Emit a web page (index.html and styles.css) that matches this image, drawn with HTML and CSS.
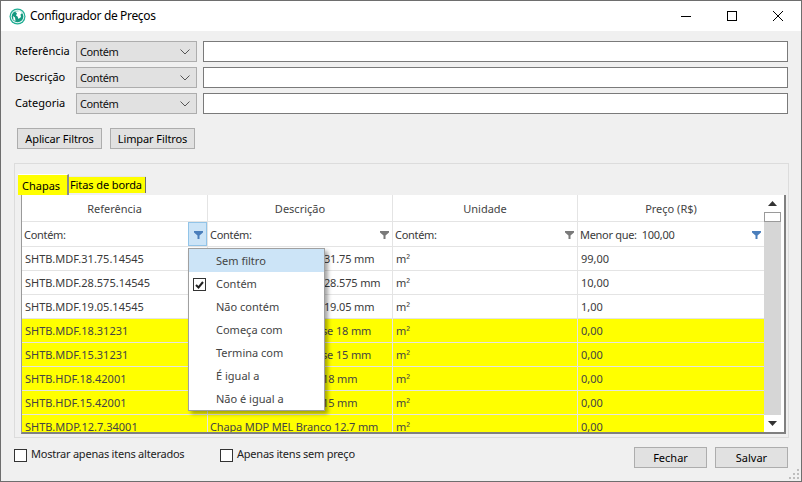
FILE: index.html
```html
<!DOCTYPE html>
<html lang="pt-BR">
<head>
<meta charset="utf-8">
<title>Configurador de Preços</title>
<link rel="stylesheet" href="styles.css">
</head>
<body>
<div class="window">
  <header class="titlebar">
    <svg class="app-icon" width="17" height="17" viewBox="0 0 17 17"><circle cx="8.5" cy="8.5" r="8" fill="#1fae94"/><circle cx="8.5" cy="8.5" r="6.8" fill="#e6f6f3"/><circle cx="8.5" cy="8.5" r="5.8" fill="#14987f"/><path d="M6 3.5 L11 3 L13.2 5 L11.5 6.5 L12 9 L9.5 11 L8.5 8.5 L7 7.5 L8 5.5Z M4 8 L6 9.5 L6.5 13 L4.5 12Z" fill="#fff"/></svg>
    <span class="title">Configurador de Preços</span>
    <div class="controls">
      <svg width="10" height="10" viewBox="0 0 10 10"><path d="M0 5.5H10" stroke="#000"/></svg>
      <svg width="10" height="10" viewBox="0 0 10 10"><rect x=".5" y=".5" width="9" height="9" fill="none" stroke="#000"/></svg>
      <svg width="10" height="10" viewBox="0 0 10 10"><path d="M0 0L10 10M10 0L0 10" stroke="#000" stroke-width="1"/></svg>
    </div>
  </header>

  <section class="filters">
    <div class="filter-row">
      <label class="filter-label">Referência</label>
      <div class="combo"><span>Contém</span><svg width="10" height="6" viewBox="0 0 10 6"><path d="M.5 .5L5 5L9.5 .5" fill="none" stroke="#555"/></svg></div>
      <input class="text-input" type="text">
    </div>
    <div class="filter-row">
      <label class="filter-label">Descrição</label>
      <div class="combo"><span>Contém</span><svg width="10" height="6" viewBox="0 0 10 6"><path d="M.5 .5L5 5L9.5 .5" fill="none" stroke="#555"/></svg></div>
      <input class="text-input" type="text">
    </div>
    <div class="filter-row">
      <label class="filter-label">Categoria</label>
      <div class="combo"><span>Contém</span><svg width="10" height="6" viewBox="0 0 10 6"><path d="M.5 .5L5 5L9.5 .5" fill="none" stroke="#555"/></svg></div>
      <input class="text-input" type="text">
    </div>
  </section>

  <div class="filter-actions">
    <button class="btn btn-filter">Aplicar Filtros</button>
    <button class="btn btn-filter">Limpar Filtros</button>
  </div>

  <section class="group">
    <div class="tabs">
      <div class="tab tab-active">Chapas</div>
      <div class="tab tab-other">Fitas de borda</div>
    </div>
    <div class="page">
      <div class="grid">
        <div class="row row-head">
          <div class="cell">Referência</div>
          <div class="cell">Descrição</div>
          <div class="cell">Unidade</div>
          <div class="cell">Preço (R$)</div>
        </div>
        <div class="row row-filter">
          <div class="cell"><span class="ftext">Contém:</span><span class="fbtn fbtn-open"><svg class="funnel" width="9" height="8" viewBox="0 0 9 8"><path d="M0 0H9V1.5L5.5 4.5V8H3.5V4.5L0 1.5Z" fill="#4a7ebb"/></svg></span></div>
          <div class="cell"><span class="ftext">Contém:</span><span class="fbtn"><svg class="funnel" width="9" height="8" viewBox="0 0 9 8"><path d="M0 0H9V1.5L5.5 4.5V8H3.5V4.5L0 1.5Z" fill="#7a7a7a"/></svg></span></div>
          <div class="cell"><span class="ftext">Contém:</span><span class="fbtn"><svg class="funnel" width="9" height="8" viewBox="0 0 9 8"><path d="M0 0H9V1.5L5.5 4.5V8H3.5V4.5L0 1.5Z" fill="#7a7a7a"/></svg></span></div>
          <div class="cell"><span class="ftext">Menor que:&nbsp; 100,00</span><span class="fbtn"><svg class="funnel" width="9" height="8" viewBox="0 0 9 8"><path d="M0 0H9V1.5L5.5 4.5V8H3.5V4.5L0 1.5Z" fill="#4a7ebb"/></svg></span></div>
        </div>
        <div class="row"><div class="cell">SHTB.MDF.31.75.14545</div><div class="cell cell-desc">Chapa MDF Branco TX 31.75 mm</div><div class="cell">m²</div><div class="cell">99,00</div></div>
        <div class="row"><div class="cell">SHTB.MDF.28.575.14545</div><div class="cell cell-desc">Chapa MDF Branco TX 28.575 mm</div><div class="cell">m²</div><div class="cell">10,00</div></div>
        <div class="row"><div class="cell">SHTB.MDF.19.05.14545</div><div class="cell cell-desc">Chapa MDF Branco TX 19.05 mm</div><div class="cell">m²</div><div class="cell">1,00</div></div>
        <div class="row row-warn"><div class="cell">SHTB.MDF.18.31231</div><div class="cell cell-desc">Chapa MDF Branco Base 18 mm</div><div class="cell">m²</div><div class="cell">0,00</div></div>
        <div class="row row-warn"><div class="cell">SHTB.MDF.15.31231</div><div class="cell cell-desc">Chapa MDF Branco Base 15 mm</div><div class="cell">m²</div><div class="cell">0,00</div></div>
        <div class="row row-warn"><div class="cell">SHTB.HDF.18.42001</div><div class="cell cell-desc">Chapa HDF Branco TX 18 mm</div><div class="cell">m²</div><div class="cell">0,00</div></div>
        <div class="row row-warn"><div class="cell">SHTB.HDF.15.42001</div><div class="cell cell-desc">Chapa HDF Branco TX 15 mm</div><div class="cell">m²</div><div class="cell">0,00</div></div>
        <div class="row row-warn"><div class="cell">SHTB.MDP.12.7.34001</div><div class="cell cell-desc">Chapa MDP MEL Branco 12.7 mm</div><div class="cell">m²</div><div class="cell">0,00</div></div>
      </div>
      <div class="scrollbar">
        <div class="sb-btn"><svg width="9" height="5" viewBox="0 0 9 5"><path d="M4.5 0L9 5H0Z" fill="#333"/></svg></div>
        <div class="sb-thumb"></div>
        <div class="sb-track"></div>
        <div class="sb-btn"><svg width="9" height="5" viewBox="0 0 9 5"><path d="M0 0H9L4.5 5Z" fill="#333"/></svg></div>
      </div>
    </div>
  </section>

  <footer class="footer">
    <label class="check check-a"><span class="box"></span>Mostrar apenas itens alterados</label>
    <label class="check check-b"><span class="box"></span>Apenas itens sem preço</label>
    <button class="btn btn-footer btn-close">Fechar</button>
    <button class="btn btn-footer">Salvar</button>
  </footer>

  <ul class="menu">
    <li class="menu-item menu-item-hover">Sem filtro</li>
    <li class="menu-item"><span class="menu-check"><svg width="9" height="8" viewBox="0 0 9 8"><path d="M1 4L3.5 6.5L8 1" fill="none" stroke="#222" stroke-width="2"/></svg></span>Contém</li>
    <li class="menu-item">Não contém</li>
    <li class="menu-item">Começa com</li>
    <li class="menu-item">Termina com</li>
    <li class="menu-item">É igual a</li>
    <li class="menu-item">Não é igual a</li>
  </ul>

  <svg class="grip" width="11" height="11" viewBox="0 0 11 11"><path d="M8 0h2v2H8zM4 4h2v2H4zM8 4h2v2H8zM0 8h2v2H0zM4 8h2v2H4zM8 8h2v2H8z" fill="#bdbdbd"/></svg>
</div>
</body>
</html>
```
FILE: styles.css
```css
* { box-sizing: border-box; }
html, body { margin: 0; padding: 0; }
body { width: 802px; height: 482px; overflow: hidden; font: 11px/16px "Noto Sans", "Open Sans", sans-serif; color: #000; background: #f0f0f0; }
.window { position: relative; width: 802px; height: 482px; border: 1px solid #6e6e6e; background: #f0f0f0; overflow: hidden; display: flex; flex-direction: column; }

.titlebar { height: 30px; flex: none; background: #fff; display: flex; align-items: center; padding-left: 8px; }
.app-icon { flex: none; }
.title { margin-left: 4px; color: #000; font-size: 12px; letter-spacing: -.35px; }
.controls { margin-left: auto; display: flex; gap: 36px; padding-right: 18px; align-items: center; }
.controls svg { display: block; }

.filters { padding: 10px 13px 0 14px; display: flex; flex-direction: column; gap: 5px; }
.filter-row { display: flex; align-items: stretch; height: 21px; }
.filter-label { width: 61px; line-height: 20px; }
.combo { width: 121px; background: #e1e1e1; border: 1px solid #adadad; display: flex; align-items: center; justify-content: space-between; padding: 0 6px 0 3px; }
.combo span { color: #111; letter-spacing: -.4px; }
.text-input { margin-left: 6px; width: 585px; height: 21px; border: 1px solid #7a7a7a; background: #fff; padding: 0; }

.filter-actions { display: flex; gap: 8px; padding: 14px 0 0 16px; }
.btn { font: inherit; color: #000; background: #e1e1e1; border: 1px solid #adadad; padding: 0; height: 21px; line-height: 18px; }
.btn-filter { width: 85px; letter-spacing: -.1px; }

.group { width: 775px; height: 275px; margin: 14px 0 0 13px; border: 1px solid #dcdcdc; padding: 10px 0 0 3px; flex: none; }
.tabs { display: flex; align-items: flex-start; height: 21px; }
.tab { white-space: nowrap; }
.tab-active { width: 51px; height: 21px; background: #ff0; border-top: 1px solid #fff; border-right: 2px solid #8a8a8a; padding: 3px 0 0 4px; }
.tab-other { width: 77px; height: 16px; margin-top: 3px; line-height: 15px; background: #ff0; border-right: 1px solid #6e6e6e; padding-left: 1px; letter-spacing: -.1px; box-shadow: 0 -1px 0 #e8e8e8; }

.page { width: 765px; height: 239px; background: #fff; border-left: 1px solid #9a9a9a; border-right: 2px solid #808080; border-bottom: 2px solid #808080; margin-left: 3px; display: flex; overflow: hidden; padding-right: 3px; }
.grid { width: 742px; flex: none; }
.row { display: grid; grid-template-columns: 186px 185px 185px 186px; height: 24px; border-bottom: 1px solid #e4e4e4; color: #3a3a3a; }
.cell { border-right: 1px solid #e4e4e4; padding: 1px 0 0 3px; line-height: 22px; white-space: nowrap; overflow: hidden; display: flex; align-items: center; }
.cell-desc { letter-spacing: -.15px; padding-left: 2px; }
.row-head { height: 27px; color: #444; }
.row-head .cell { justify-content: center; padding: 2px 0 0; }
.row-filter { height: 25px; }
.row-filter .cell { padding: 0 0 0 2px; justify-content: space-between; }
.ftext { padding-top: 2px; letter-spacing: -.3px; }
.row .cell:last-child { border-right: 0; }
.fbtn { width: 19px; height: 100%; flex: none; display: flex; align-items: center; justify-content: flex-end; padding: 2px 3px 0 0; }
.fbtn-open { background: #cce4f7; border: 1px solid #92c4e8; }
.funnel { display: block; }
.row-warn { background: #ff0; }
.row-warn .cell { color: #444; }

.scrollbar { width: 17px; flex: none; display: flex; flex-direction: column; background: #d6d6d6; }
.sb-btn { height: 17px; flex: none; background: #fff; display: flex; align-items: center; justify-content: center; }
.sb-thumb { height: 10px; flex: none; background: #fff; border: 1px solid #9a9a9a; }
.sb-track { flex: 1; }

.footer { display: flex; align-items: flex-start; padding: 9px 13px 0 13px; }
.check { display: flex; align-items: flex-start; line-height: 14px; color: #222; letter-spacing: -.23px; }
.check-a { width: 206px; }
.box { width: 13px; height: 13px; border: 1px solid #333; background: #fff; margin: 2px 4px 0 0; flex: none; }
.btn-footer { width: 73px; margin-left: 8px; }
.btn-close { margin-left: auto; }

.menu { position: absolute; left: 187px; top: 247px; width: 137px; height: 163px; margin: 0; padding: 0; list-style: none; background: #fff; border: 1px solid #a0a0a0; box-shadow: 3px 3px 4px rgba(0,0,0,.35); color: #444; }
.menu-item { position: relative; height: 23px; line-height: 23px; padding-left: 27px; }
.menu-item-hover { background: #cce4f7; }
.menu-check { position: absolute; left: 4px; top: 6px; width: 13px; height: 13px; border: 1px solid #333; display: flex; align-items: center; justify-content: center; }
.grip { position: absolute; right: 1px; bottom: 1px; }
```
